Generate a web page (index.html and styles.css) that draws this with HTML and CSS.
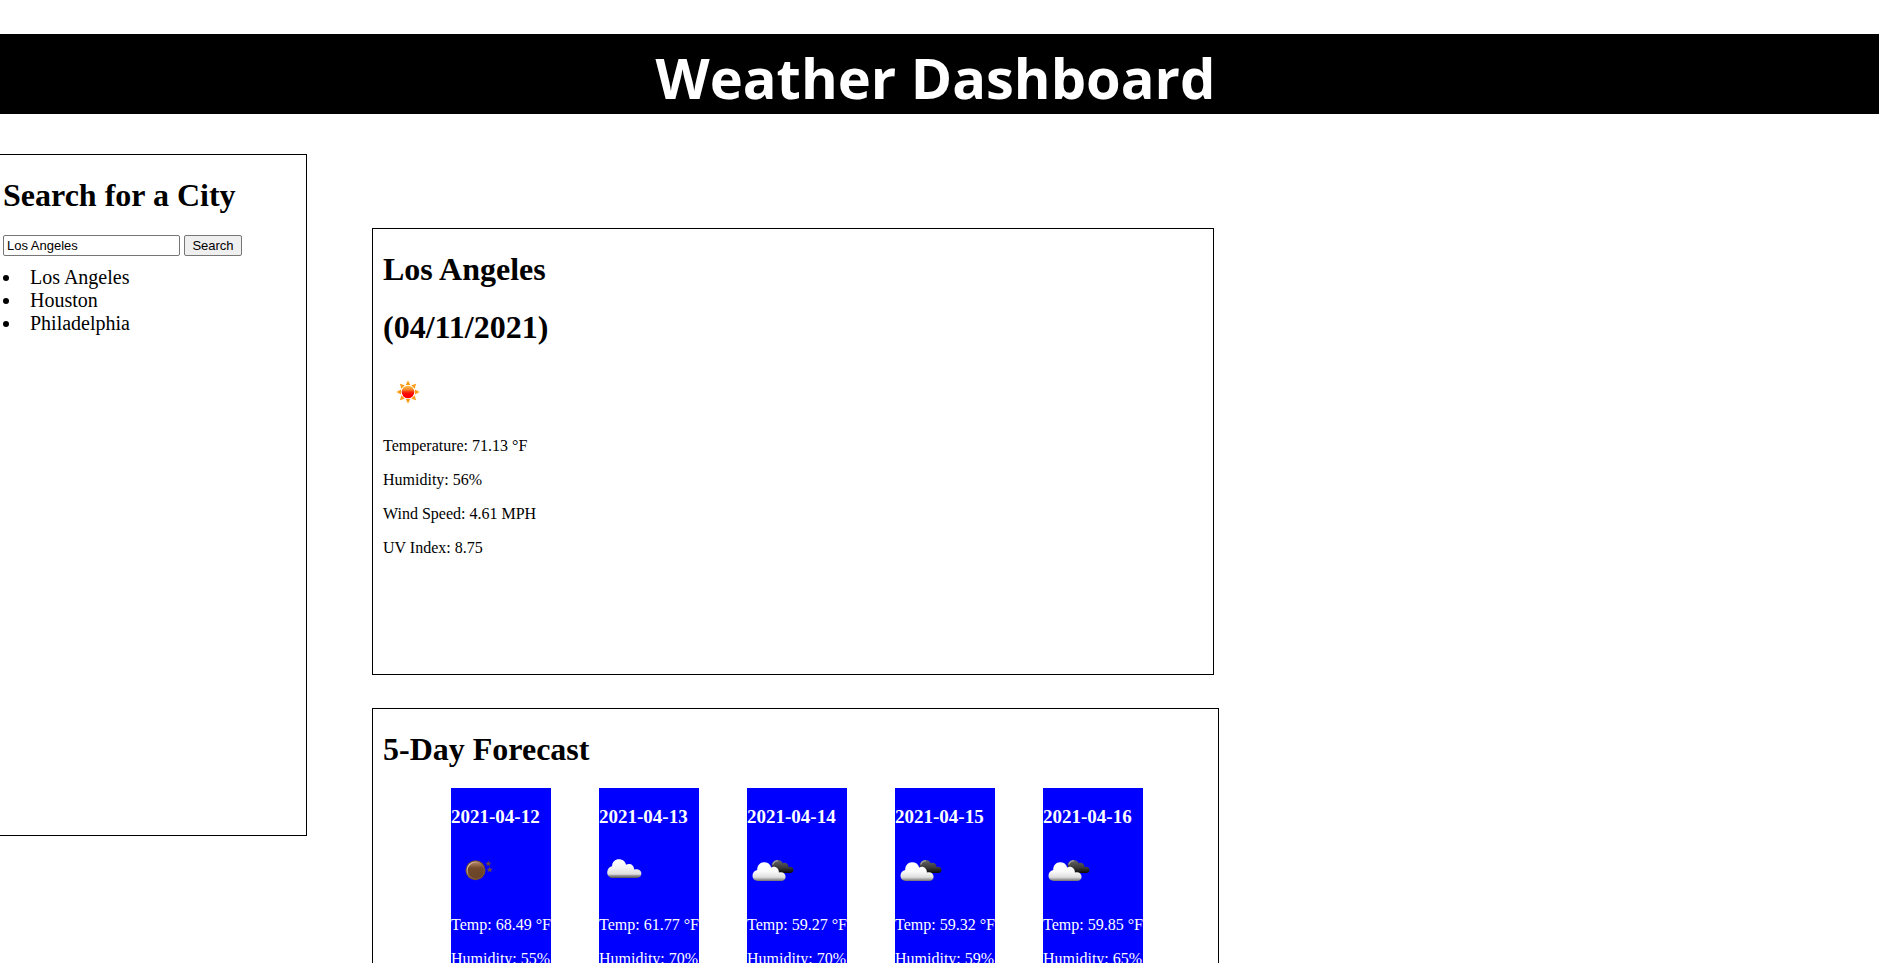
FILE: index.html
```
<!DOCTYPE html>
<html lang="en">
<head>
  <meta charset="utf-8">
  <title>Weather Dashboard</title>
  <link rel="stylesheet" href="styles.css">
</head>
<body>
  <svg class="defs" width="0" height="0" aria-hidden="true">
    <defs>
      <linearGradient id="sun-fill" x1="0" y1="0" x2="0" y2="1">
        <stop offset="0" stop-color="#ffc04a"/><stop offset=".3" stop-color="#f98a2a"/>
        <stop offset=".5" stop-color="#f62a0a"/><stop offset=".7" stop-color="#ff0000"/>
      </linearGradient>
      <linearGradient id="moon-fill" x1="0" y1="0" x2="0" y2="1">
        <stop offset="0" stop-color="#b98a68"/><stop offset=".35" stop-color="#74492c"/><stop offset="1" stop-color="#674426"/>
      </linearGradient>
      <linearGradient id="moon-rim" x1="0" y1="0" x2="1" y2="1">
        <stop offset="0" stop-color="#f3dccb"/><stop offset=".5" stop-color="#8a5f40"/><stop offset="1" stop-color="#6a462c"/>
      </linearGradient>
      <linearGradient id="cloud-fill" gradientUnits="userSpaceOnUse" x1="0" y1="13" x2="0" y2="32">
        <stop offset="0" stop-color="#ffffff"/><stop offset=".4" stop-color="#f6f6f6"/>
        <stop offset=".8" stop-color="#dedede"/><stop offset=".86" stop-color="#a0a0a0"/><stop offset="1" stop-color="#505050"/>
      </linearGradient>
      <linearGradient id="front-fill" gradientUnits="userSpaceOnUse" x1="0" y1="16" x2="0" y2="35">
        <stop offset="0" stop-color="#ffffff"/><stop offset=".5" stop-color="#fafafa"/>
        <stop offset=".8" stop-color="#dedede"/><stop offset="1" stop-color="#707070"/>
      </linearGradient>
      <linearGradient id="dark-fill" gradientUnits="userSpaceOnUse" x1="0" y1="14" x2="0" y2="27">
        <stop offset="0" stop-color="#666666"/><stop offset=".6" stop-color="#383838"/><stop offset="1" stop-color="#080808"/>
      </linearGradient>
      <symbol id="sun" viewBox="0 0 50 50">
        <g fill="#ff9c1a">
          <path id="ray" d="M25 13.5 L27.4 18 H22.6 Z"/>
          <use href="#ray" transform="rotate(45 25 25)"/><use href="#ray" transform="rotate(90 25 25)"/>
          <use href="#ray" transform="rotate(135 25 25)"/><use href="#ray" transform="rotate(180 25 25)"/>
          <use href="#ray" transform="rotate(225 25 25)"/><use href="#ray" transform="rotate(270 25 25)"/>
          <use href="#ray" transform="rotate(315 25 25)"/>
        </g>
        <circle cx="25" cy="25" r="6.3" fill="url(#sun-fill)"/>
      </symbol>
      <symbol id="moon" viewBox="0 0 50 50">
        <circle cx="24.5" cy="24.3" r="10" fill="#6e4a30"/>
        <circle cx="24.7" cy="24.5" r="8.6" fill="url(#moon-fill)" stroke="url(#moon-rim)" stroke-width="1.3"/>
        <g fill="#6a4a42">
          <path id="star" d="M37.3 14.5 L38.1 16.7 L40.3 16.8 L38.6 18.2 L39.2 20.3 L37.3 19.1 L35.4 20.3 L36 18.2 L34.3 16.8 L36.5 16.7 Z"/>
          <use href="#star" x="1.4" y="6"/>
        </g>
      </symbol>
      <symbol id="cloud" viewBox="0 0 50 50">
        <path fill="url(#cloud-fill)" d="M13.5 32 C10.4 32 8.2 29.4 8.2 26.5 C8.2 23.5 10 20.8 13 20.2 C13.2 16 16 13.3 20 13.3 C23.6 13.3 26.3 15.4 27 18.7 C30.5 16.7 35.1 18.4 35.2 23.6 C39 22.3 42.4 24.3 42.4 27.5 C42.4 30 40.5 32 37.8 32 Z"/>
      </symbol>
      <symbol id="broken" viewBox="0 0 50 50">
        <path fill="url(#dark-fill)" d="M24.5 20 C25 16 27.5 14 30.5 14 C33 14 35 15.2 35.8 17.3 C38.8 15.9 41.5 18 41.5 21 C44.3 20.4 46.5 21.7 46.5 24 C46.5 25.8 45.3 27 43.3 27 H30 Z"/>
        <path fill="none" stroke="#a0a0a0" stroke-width="1.2" d="M25.7 18.6 C26.6 15.9 28.5 14.7 31 14.8"/>
        <path fill="url(#front-fill)" d="M10.8 35 C7.8 35 5.5 32.7 5.5 29.8 C5.5 27 7.3 24.6 10.2 24 C10.2 19.5 13 16.3 17 16.3 C20.7 16.3 23.3 18.2 24.2 21.5 C28.2 19.5 32 22.3 31.9 26.6 C35.6 25.3 38.6 27.6 38.6 30.7 C38.6 33.2 36.8 35 34.2 35 Z"/>
      </symbol>
    </defs>
  </svg>

  <header class="banner">Weather Dashboard</header>

  <div class="layout">
    <aside class="search">
      <h1>Search for a City</h1>
      <form class="search-form" onsubmit="return false">
        <input class="city" type="text" value="Los Angeles" aria-label="City">
        <button class="go" type="submit">Search</button>
      </form>
      <ul class="history">
        <li>Los Angeles</li>
        <li>Houston</li>
        <li>Philadelphia</li>
      </ul>
    </aside>

    <main class="results">
      <section class="current">
        <h1>Los Angeles</h1>
        <h1>(04/11/2021)</h1>
        <svg class="icon" role="img" aria-label="Clear sky"><use href="#sun"/></svg>
        <p>Temperature: 71.13 °F</p>
        <p>Humidity: 56%</p>
        <p>Wind Speed: 4.61 MPH</p>
        <p>UV Index: 8.75</p>
      </section>

      <section class="forecast">
        <h1>5-Day Forecast</h1>
        <div class="days">
          <article class="day">
            <h3>2021-04-12</h3>
            <svg class="icon" role="img" aria-label="Clear night"><use href="#moon"/></svg>
            <p>Temp: 68.49 °F</p>
            <p>Humidity: 55%</p>
          </article>
          <article class="day">
            <h3>2021-04-13</h3>
            <svg class="icon" role="img" aria-label="Scattered clouds"><use href="#cloud"/></svg>
            <p>Temp: 61.77 °F</p>
            <p>Humidity: 70%</p>
          </article>
          <article class="day">
            <h3>2021-04-14</h3>
            <svg class="icon" role="img" aria-label="Broken clouds"><use href="#broken"/></svg>
            <p>Temp: 59.27 °F</p>
            <p>Humidity: 70%</p>
          </article>
          <article class="day">
            <h3>2021-04-15</h3>
            <svg class="icon" role="img" aria-label="Broken clouds"><use href="#broken"/></svg>
            <p>Temp: 59.32 °F</p>
            <p>Humidity: 59%</p>
          </article>
          <article class="day">
            <h3>2021-04-16</h3>
            <svg class="icon" role="img" aria-label="Broken clouds"><use href="#broken"/></svg>
            <p>Temp: 59.85 °F</p>
            <p>Humidity: 65%</p>
          </article>
        </div>
      </section>
    </main>
  </div>
</body>
</html>
```
FILE: styles.css
```
body {
  margin: 34px 8px 0 -8px;
  background: #fff;
  color: #000;
  font-family: "Liberation Serif", "Times New Roman", serif;
  font-size: 16px;
}

.defs {
  position: absolute;
}

h1 {
  margin: 22px 0;
  font-size: 32px;
  line-height: 36px;
}

.banner {
  padding-top: 6px;
  background: #000;
  color: #fff;
  font-family: "Open Sans", "Segoe UI", sans-serif;
  font-size: 56px;
  font-weight: 700;
  line-height: 74px;
  text-align: center;
}

.layout {
  display: grid;
  grid-template-columns: 315px minmax(0, 847px);
  column-gap: 65px;
  align-items: start;
  margin-top: 40px;
}

.search,
.current,
.forecast {
  display: flow-root;
  box-sizing: border-box;
  border: 1px solid #000;
  padding: 0 10px;
}

.search {
  min-height: 682px;
}

.search-form {
  display: flex;
  gap: 4px;
}

.city,
.go {
  box-sizing: border-box;
  height: 21px;
  border: 1px solid #767676;
  border-radius: 2px;
  font-family: "Liberation Sans", Arial, sans-serif;
  font-size: 13px;
  color: #000;
}

.city {
  width: 177px;
  padding: 1px 3px;
  background: #fff;
}

.go {
  min-width: 58px;
  padding: 0 7px;
  background: #efefef;
}

.history {
  margin: 10px 0;
  padding: 0;
  list-style-position: inside;
  font-size: 20px;
  line-height: 23px;
}

.results {
  margin-top: 74px;
}

.current {
  min-height: 447px;
  margin: 0 5px 33px 0;
}

.forecast h1 {
  margin-bottom: 21px;
}

.icon {
  display: block;
  width: 50px;
  height: 50px;
  margin-bottom: 20px;
}

p {
  margin: 16px 0;
  line-height: 18px;
}

.days {
  display: flex;
  gap: 48px;
  padding-left: 68px;
}

.day {
  min-width: 100px;
  background: #00f;
  color: #fff;
  white-space: nowrap;
}

.day h3 {
  margin: 18px 0;
  font-size: 19px;
  line-height: 22px;
}
```
